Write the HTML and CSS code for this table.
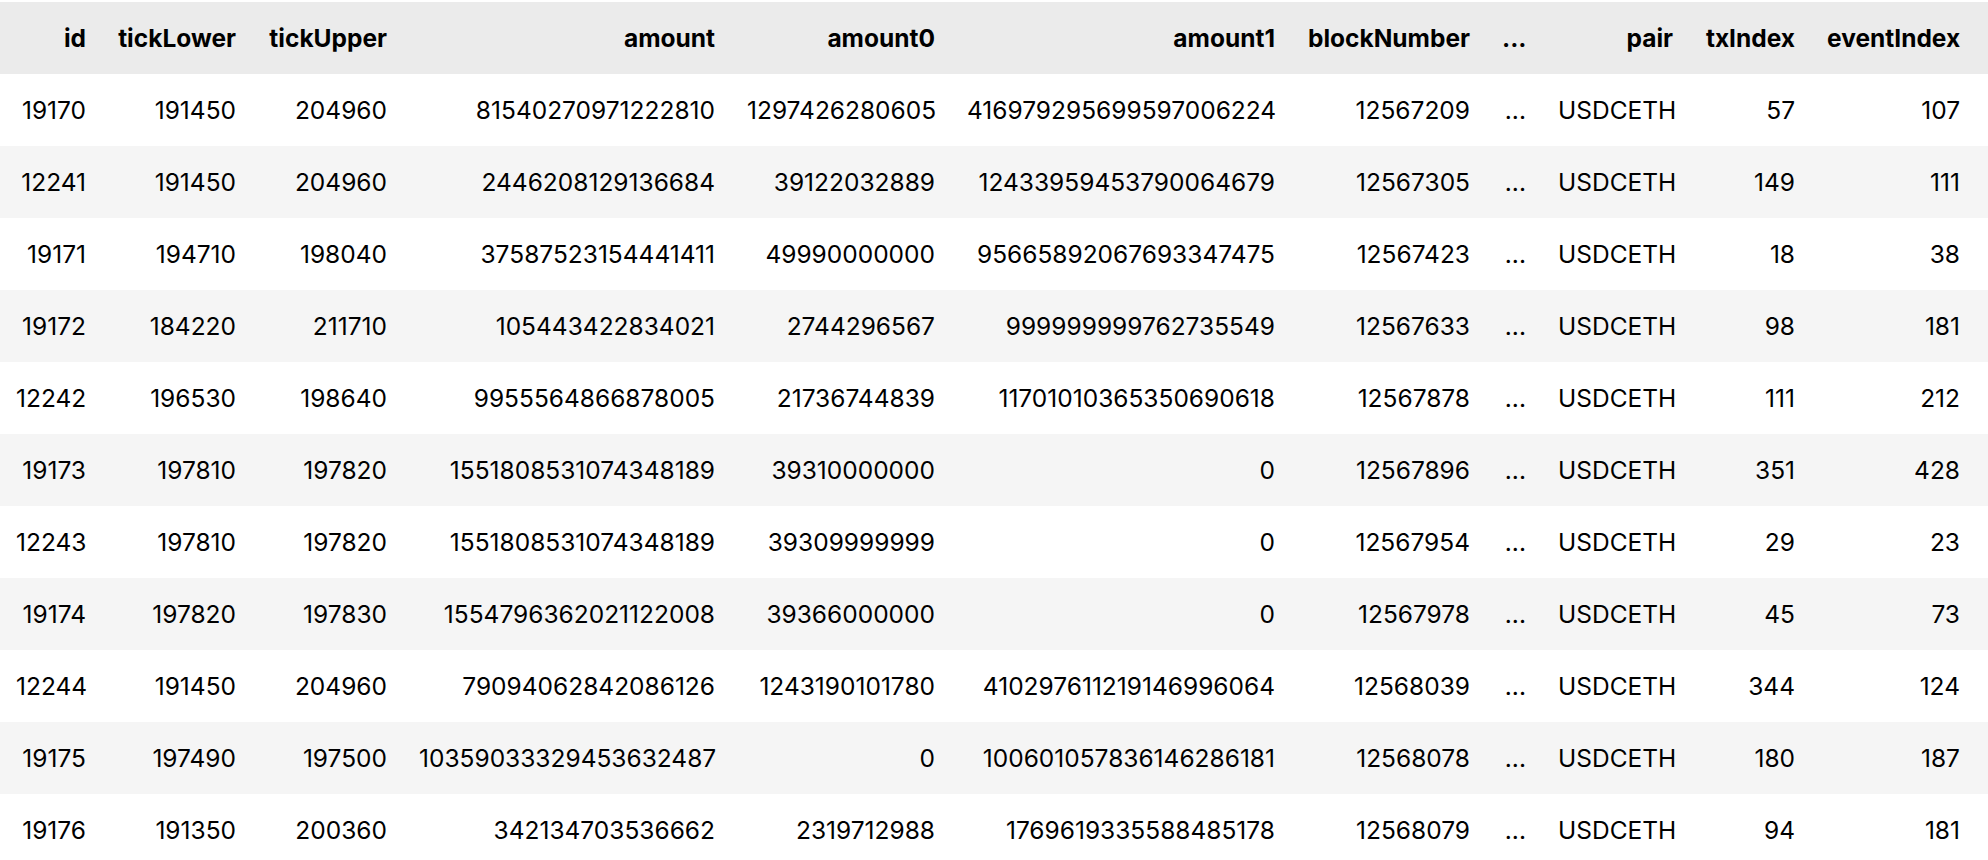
FILE: index.html
```html
<!DOCTYPE html>
<html>
<head>
<meta charset="utf-8">
<link rel="stylesheet" href="styles.css">
</head>
<body>
<table class="df">
  <colgroup>
    <col class="c-id"><col class="c-tl"><col class="c-tu"><col class="c-am"><col class="c-a0"><col class="c-a1"><col class="c-bn"><col class="c-el"><col class="c-pr"><col class="c-tx"><col class="c-ev">
  </colgroup>
  <thead>
    <tr><th>id</th><th>tickLower</th><th>tickUpper</th><th>amount</th><th>amount0</th><th>amount1</th><th>blockNumber</th><th>...</th><th>pair</th><th>txIndex</th><th>eventIndex</th></tr>
  </thead>
  <tbody>
    <tr><td>19170</td><td>191450</td><td>204960</td><td>81540270971222810</td><td>1297426280605</td><td>416979295699597006224</td><td>12567209</td><td>...</td><td>USDCETH</td><td>57</td><td>107</td></tr>
    <tr><td>12241</td><td>191450</td><td>204960</td><td>2446208129136684</td><td>39122032889</td><td>12433959453790064679</td><td>12567305</td><td>...</td><td>USDCETH</td><td>149</td><td>111</td></tr>
    <tr><td>19171</td><td>194710</td><td>198040</td><td>37587523154441411</td><td>49990000000</td><td>95665892067693347475</td><td>12567423</td><td>...</td><td>USDCETH</td><td>18</td><td>38</td></tr>
    <tr><td>19172</td><td>184220</td><td>211710</td><td>105443422834021</td><td>2744296567</td><td>999999999762735549</td><td>12567633</td><td>...</td><td>USDCETH</td><td>98</td><td>181</td></tr>
    <tr><td>12242</td><td>196530</td><td>198640</td><td>9955564866878005</td><td>21736744839</td><td>11701010365350690618</td><td>12567878</td><td>...</td><td>USDCETH</td><td>111</td><td>212</td></tr>
    <tr><td>19173</td><td>197810</td><td>197820</td><td>1551808531074348189</td><td>39310000000</td><td>0</td><td>12567896</td><td>...</td><td>USDCETH</td><td>351</td><td>428</td></tr>
    <tr><td>12243</td><td>197810</td><td>197820</td><td>1551808531074348189</td><td>39309999999</td><td>0</td><td>12567954</td><td>...</td><td>USDCETH</td><td>29</td><td>23</td></tr>
    <tr><td>19174</td><td>197820</td><td>197830</td><td>1554796362021122008</td><td>39366000000</td><td>0</td><td>12567978</td><td>...</td><td>USDCETH</td><td>45</td><td>73</td></tr>
    <tr><td>12244</td><td>191450</td><td>204960</td><td>79094062842086126</td><td>1243190101780</td><td>410297611219146996064</td><td>12568039</td><td>...</td><td>USDCETH</td><td>344</td><td>124</td></tr>
    <tr><td>19175</td><td>197490</td><td>197500</td><td>10359033329453632487</td><td>0</td><td>100601057836146286181</td><td>12568078</td><td>...</td><td>USDCETH</td><td>180</td><td>187</td></tr>
    <tr><td>19176</td><td>191350</td><td>200360</td><td>342134703536662</td><td>2319712988</td><td>1769619335588485178</td><td>12568079</td><td>...</td><td>USDCETH</td><td>94</td><td>181</td></tr>
  </tbody>
</table>
</body>
</html>
```

FILE: styles.css
```css
html, body {
  margin: 0;
  padding: 0;
  background: #ffffff;
}

body {
  padding-top: 2px;
  font-family: Inter, "Liberation Sans", sans-serif;
  font-size: 24.5px;
  color: #000000;
}

.df {
  width: 1988px;
  table-layout: fixed;
  border-collapse: collapse;
  border-spacing: 0;
}

.c-id { width: 102px; }
.c-tl { width: 150px; }
.c-tu { width: 151px; }
.c-am { width: 328px; }
.c-a0 { width: 220px; }
.c-a1 { width: 340px; }
.c-bn { width: 195px; }
.c-el { width: 56px; }
.c-pr { width: 147px; }
.c-tx { width: 122px; }
.c-ev { width: 177px; }

.df th,
.df td {
  height: 72px;
  padding: 0 16px;
  text-align: right;
  vertical-align: middle;
  white-space: nowrap;
  line-height: 1;
  box-sizing: border-box;
}

.df th:last-child,
.df td:last-child {
  padding-right: 28px;
}

.df thead tr {
  background: #ebebeb;
}

.df th {
  font-weight: 700;
}

.df td {
  font-weight: 400;
}

.df tbody tr:nth-child(even) {
  background: #f5f5f5;
}
```
